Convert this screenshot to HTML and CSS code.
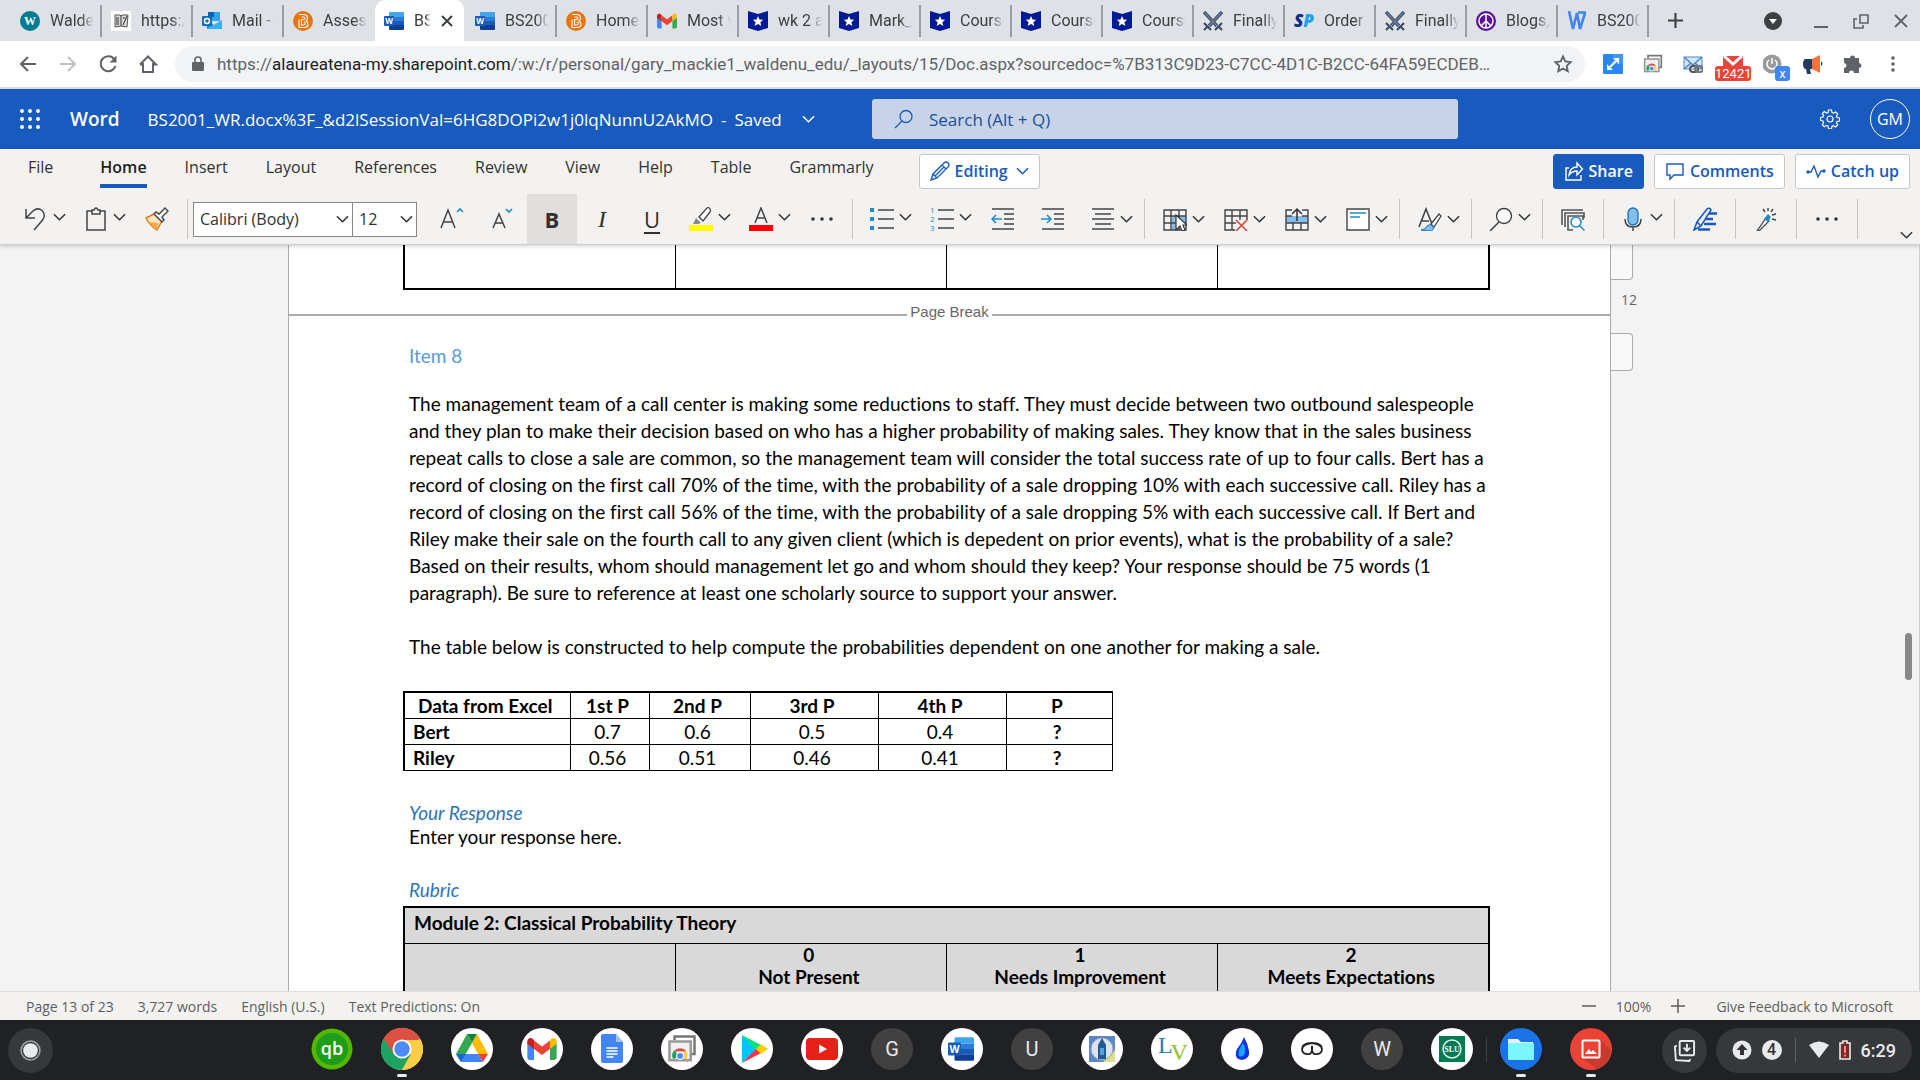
FILE: index.html
```html
<!DOCTYPE html>
<html lang="en">
<head>
    <meta charset="UTF-8">
    <meta name="viewport" content="width=device-width, initial-scale=1.0">
    <title>BS2001_WR.docx - Word</title>
    <link rel="stylesheet" href="styles.css">
</head>
<body>

<!-- shared icons -->
<svg class="sprite" aria-hidden="true">
    <symbol id="chev" viewBox="0 0 14 8"><path d="M1 1l6 6 6-6" fill="none" stroke="currentColor" stroke-width="1.6"/></symbol>
    <symbol id="word" viewBox="0 0 20 20">
        <path d="M6 1h13q1 0 1 1v4H5V2q0-1 1-1z" fill="#41a5ee"/><path d="M5 6h15v4H5z" fill="#2b7cd3"/><path d="M5 10h15v4H5z" fill="#185abd"/><path d="M5 14h15v4q0 1-1 1H6q-1 0-1-1z" fill="#103f91"/>
        <rect y="5" width="10" height="10" rx="1" fill="#185abd"/><text x="5" y="13" font-family="Open Sans, sans-serif" font-size="8" font-weight="700" fill="#fff" text-anchor="middle">W</text>
    </symbol>
    <symbol id="brightspace" viewBox="0 0 20 20">
        <circle cx="10" cy="10" r="10" fill="#e87511"/><path d="M6 3.500h4.500q4 0 4 3.500 0 2-1.500 3 2 1 2 3.200 0 3.300-4 3.300H6V8.500M8.500 6h2q1.500 0 1.500 1.200t-1.500 1.300h-2v5.500h2.200q1.600 0 1.600-1.500T10.700 11" fill="none" stroke="#fff" stroke-width="1.100"/>
    </symbol>
    <symbol id="star-shield" viewBox="0 0 20 20">
        <path d="M0 0l10 3 10-3v17l-10 3-10-3z" fill="#001a96"/><path d="M10 5l1.500 3.500 3.700.3-2.800 2.500.9 3.700-3.300-2-3.300 2 .9-3.700-2.800-2.500 3.700-.3z" fill="#fff"/>
    </symbol>
    <symbol id="swords" viewBox="0 0 20 20">
        <path d="M1 1l13 14M19 1L6 15" stroke="#44546f" stroke-width="3.500"/><path d="M2 2l12 13M18 2L6 15" stroke="#8797b0" stroke-width="1"/><path d="M1 12l7 7M19 12l-7 7M5 15l-4 4M15 15l4 4" stroke="#3a4863" stroke-width="2"/>
    </symbol>
    <symbol id="gmail" viewBox="0 0 24 18">
        <path d="M0 3v13q0 2 2 2h3.500V7z" fill="#4285f4"/><path d="M24 3v13q0 2-2 2h-3.500V7z" fill="#34a853"/><path d="M5.500 2L12 7l6.500-5v7L12 14 5.500 9z" fill="#ea4335"/><path d="M0 3q0-3 3-3 1 0 2.500 2v7L0 5z" fill="#c5221f"/><path d="M24 3q0-3-3-3-1 0-2.500 2v7L24 5z" fill="#fbbc04"/>
    </symbol>
    <symbol id="webstore" viewBox="0 0 24 24">
        <path d="M6 5V2h16v14h-3" fill="#fff" stroke="#777" stroke-width="2"/><rect x="2" y="6" width="17" height="15" fill="#f1f1f1" stroke="#999" stroke-width="2"/>
        <path d="M5 20a5.500 5.500 0 0 1 1-7l4 5z" fill="#1da462"/><path d="M5.500 14a6 6 0 0 1 10 0z" fill="#dd5144"/><path d="M15.500 14q2 3 0 6h-5l3-6z" fill="#ffcd46"/><circle cx="10.500" cy="17.500" r="2.800" fill="#4c8bf5" stroke="#fff"/>
    </symbol>
</svg>

<nav class="tab-strip">
    <div class="tabs">
        <a class="tab" href="#"><svg viewBox="0 0 20 20"><circle cx="10" cy="10" r="10" fill="#007c92"/><text x="10" y="14" font-family="Liberation Serif, serif" font-size="12" font-weight="700" fill="#fff" text-anchor="middle">W</text></svg><span>Walden</span></a>
        <a class="tab" href="#"><svg viewBox="0 0 20 20"><path d="M0 0h20v20H0z" fill="#fff"/><path d="M4 4h5l1 1 1-1h6l-1 12-6-1-6 1z" fill="#d8d8d8" stroke="#555"/><path d="M10 5v10M5 7h3M5 9h3M5 11h3M5 13h3M12 14l4-9M12 7h2" stroke="#333"/></svg><span>https://</span></a>
        <a class="tab" href="#"><svg viewBox="0 0 20 20"><path d="M6 1h12v9H6z" fill="#28a8ea"/><path d="M6 1h6v5H6z" fill="#0364b8"/><path d="M4 9l8 5 8-5v9H5z" fill="#1490df"/><path d="M4 18l16-9v8q0 1-1 1z" fill="#50d9ff" opacity=".5"/><rect y="5" width="10" height="10" rx="1" fill="#0f6cbd"/><circle cx="5" cy="10" r="2.500" fill="none" stroke="#fff" stroke-width="1.500"/></svg><span>Mail - G</span></a>
        <a class="tab last" href="#"><svg><use href="#brightspace"/></svg><span>Assess</span></a>
        <a class="tab active" href="#"><svg><use href="#word"/></svg><span>BS20</span><svg class="close" viewBox="0 0 12 12"><path d="M1 1l10 10M11 1L1 11" stroke="#3c4043" stroke-width="2"/></svg></a>
        <a class="tab" href="#"><svg><use href="#word"/></svg><span>BS2001</span></a>
        <a class="tab" href="#"><svg><use href="#brightspace"/></svg><span>Homep</span></a>
        <a class="tab" href="#"><svg><use href="#gmail"/></svg><span>Most v</span></a>
        <a class="tab" href="#"><svg><use href="#star-shield"/></svg><span>wk 2 as</span></a>
        <a class="tab" href="#"><svg><use href="#star-shield"/></svg><span>Mark_G</span></a>
        <a class="tab" href="#"><svg><use href="#star-shield"/></svg><span>Course</span></a>
        <a class="tab" href="#"><svg><use href="#star-shield"/></svg><span>Course</span></a>
        <a class="tab" href="#"><svg><use href="#star-shield"/></svg><span>Course</span></a>
        <a class="tab" href="#"><svg><use href="#swords"/></svg><span>Finally</span></a>
        <a class="tab" href="#"><svg viewBox="0 0 20 20"><text x="0" y="16" font-family="Open Sans, sans-serif" font-size="17" font-weight="800" font-style="italic" fill="#0b2f87">S<tspan fill="#1aa3e8">P</tspan></text></svg><span>Order</span></a>
        <a class="tab" href="#"><svg><use href="#swords"/></svg><span>Finally</span></a>
        <a class="tab" href="#"><svg viewBox="0 0 20 20"><circle cx="10" cy="10" r="10" fill="#5b0f9b"/><circle cx="10" cy="10" r="7" fill="none" stroke="#fff" stroke-width="1.500"/><path d="M10 3v14M10 10l-5 5M10 10l5 5" stroke="#fff" stroke-width="1.500"/></svg><span>Blogs,</span></a>
        <a class="tab" href="#"><svg viewBox="0 0 20 20"><path d="M2 0l4 18 4-16 3 16 5-16M11 1.500h8" fill="none" stroke="#4285f4" stroke-width="2.600"/></svg><span>BS2001</span></a>
    </div>
    <button class="new-tab" aria-label="New tab"><svg viewBox="0 0 14 14"><path d="M7 0v14M0 7h14" stroke="#3c4043" stroke-width="2"/></svg></button>
    <div class="window-controls">
        <button class="tab-search" aria-label="Search tabs"><svg viewBox="0 0 20 20"><circle cx="10" cy="10" r="9" fill="#3c4043"/><path d="M6 8h8l-4 5z" fill="#fff"/></svg></button>
        <button aria-label="Minimize"><svg viewBox="0 0 20 20"><path d="M3 16h14" stroke="#5f6368" stroke-width="2"/></svg></button>
        <button aria-label="Restore"><svg viewBox="0 0 20 20"><path d="M9 4h8v8H9zM6 8H3v9h9v-3" fill="none" stroke="#5f6368" stroke-width="1.600"/></svg></button>
        <button aria-label="Close"><svg viewBox="0 0 20 20"><path d="M4 4l12 12M16 4L4 16" stroke="#5f6368" stroke-width="1.800"/></svg></button>
    </div>
</nav>

<div class="browser-bar">
    <div class="nav-buttons">
        <button aria-label="Back"><svg viewBox="0 0 20 20"><path d="M18 10H3M10 3l-7 7 7 7" fill="none" stroke="#5f6368" stroke-width="2"/></svg></button>
        <button aria-label="Forward"><svg viewBox="0 0 20 20"><path d="M2 10h15M10 3l7 7-7 7" fill="none" stroke="#bdc1c6" stroke-width="2"/></svg></button>
        <button aria-label="Reload"><svg viewBox="0 0 20 20"><path d="M16.500 5.500A7.500 7.500 0 1 0 17.400 12" fill="none" stroke="#5f6368" stroke-width="2"/><path d="M18.500 1.500v7h-7z" fill="#5f6368"/></svg></button>
        <button aria-label="Home"><svg viewBox="0 0 20 20"><path d="M5 9v9h10V9M2 10.500L10 2.500l8 8h-3.500M2 10.500h3" fill="none" stroke="#5f6368" stroke-width="2"/></svg></button>
    </div>
    <div class="omnibox">
        <svg class="lock" viewBox="0 0 12 16"><rect y="6" width="12" height="9" rx="1" fill="#5f6368"/><path d="M3 7V4a3 3 0 0 1 6 0v3" fill="none" stroke="#5f6368" stroke-width="1.600"/></svg>
        <div class="url" role="textbox" aria-label="Address" contenteditable="true" spellcheck="false">https://<b>alaureatena-my.sharepoint.com</b>/:w:/r/personal/gary_mackie1_waldenu_edu/_layouts/15/Doc.aspx?sourcedoc=%7B313C9D23-C7CC-4D1C-B2CC-64FA59ECDEB…</div>
        <button class="star" aria-label="Bookmark"><svg viewBox="0 0 20 20"><path d="M10 2.500l2.300 5 5.400.6-4 3.700 1.100 5.400L10 14.500l-4.800 2.700 1.100-5.400-4-3.700 5.400-.6z" fill="none" stroke="#5f6368" stroke-width="1.800"/></svg></button>
    </div>
    <div class="extensions">
        <button aria-label="Screen capture"><svg viewBox="0 0 20 20"><rect width="20" height="20" rx="1" fill="#2a85f5"/><path d="M10 0h9q1 0 1 1v9H10z" fill="#55a3ff" opacity=".6"/><path d="M7 13l6-6" stroke="#fff" stroke-width="2"/><path d="M10 4h6v6zM4 10v6h6z" fill="#fff"/></svg></button>
        <button aria-label="Web store"><svg><use href="#webstore"/></svg></button>
        <button aria-label="Mail link"><svg viewBox="0 0 20 20"><path d="M1 3h18v12H1z" fill="#d5e6fb" stroke="#4d83c9"/><path d="M1 3l9 8 9-8M1 15l7-6M19 15l-7-6" fill="none" stroke="#4d83c9" stroke-width="1.500"/><rect x="7" y="12" width="8" height="6" rx="3" fill="none" stroke="#555" stroke-width="2"/><rect x="12" y="12" width="8" height="6" rx="3" fill="none" stroke="#777" stroke-width="2"/></svg></button>
        <button class="badged" aria-label="Mail checker"><svg viewBox="0 0 20 20"><path d="M0 2h20v16H0z" fill="#e8453c"/><path d="M1 2l9 8 9-8" fill="none" stroke="#fff" stroke-width="3"/></svg><span class="badge red">12421</span></button>
        <button class="badged" aria-label="Power"><svg viewBox="0 0 20 20"><circle cx="9" cy="10" r="9.500" fill="#9a9a9a"/><path d="M6 6a5 5 0 1 0 6 0M9 4v6" fill="none" stroke="#fff" stroke-width="1.500"/></svg><span class="badge blue">x</span></button>
        <button aria-label="Announcements"><svg viewBox="0 0 20 20"><path d="M9 5v10H7l1 5H4l-1-5Q0 15 0 10t3-5z" fill="#253b5b"/><path d="M9 5l8-4v18l-8-4z" fill="#ff6f3c"/><path d="M18 7q3 3 0 5z" fill="#253b5b"/></svg></button>
        <button aria-label="Extensions"><svg viewBox="0 0 20 20"><path d="M7 4a2.500 2.500 0 0 1 5 0h4v5a2.500 2.500 0 0 1 0 5v5h-5a2.500 2.500 0 0 0-5 0H1v-5a2.500 2.500 0 0 0 0-5V4z" fill="#5f6368"/></svg></button>
        <button aria-label="Menu"><svg viewBox="0 0 20 20"><circle cx="10" cy="4" r="1.800" fill="#5f6368"/><circle cx="10" cy="10" r="1.800" fill="#5f6368"/><circle cx="10" cy="16" r="1.800" fill="#5f6368"/></svg></button>
    </div>
</div>

<header class="app-header">
    <button class="waffle" aria-label="App launcher"><svg viewBox="0 0 20 20" fill="#fff"><circle cx="2" cy="2" r="2"/><circle cx="10" cy="2" r="2"/><circle cx="18" cy="2" r="2"/><circle cx="2" cy="10" r="2"/><circle cx="10" cy="10" r="2"/><circle cx="18" cy="10" r="2"/><circle cx="2" cy="18" r="2"/><circle cx="10" cy="18" r="2"/><circle cx="18" cy="18" r="2"/></svg></button>
    <div class="title-area">
        <a class="brand" href="#">Word</a>
        <button class="doc-title"><span>BS2001_WR.docx%3F_&amp;d2lSessionVal=6HG8DOPi2w1j0lqNunnU2AkMO</span><span>-</span><span>Saved</span><svg class="chev"><use href="#chev"/></svg></button>
    </div>
    <label class="search">
        <svg viewBox="0 0 20 20"><circle cx="12" cy="7.500" r="6" fill="none" stroke="#185abd" stroke-width="1.300"/><path d="M8 12l-7 7" stroke="#185abd" stroke-width="1.300"/></svg>
        <input type="text" placeholder="Search (Alt + Q)" aria-label="Search">
    </label>
    <div class="account">
        <button aria-label="Settings"><svg viewBox="0 0 20 20" fill="none" stroke="#fff" stroke-width="1.200"><circle cx="10" cy="10" r="3"/><path d="M8.500 1h3l.5 2.500 1.500.7L15.700 3l2 2-1.300 2.200.6 1.300 2.500.5v3l-2.500.5-.6 1.300 1.300 2.200-2 2-2.200-1.300-1.500.6-.5 2.500h-3L8 17l-1.500-.6L4.300 17.700l-2-2 1.300-2.200L3 12 .5 11.500v-3L3 8l.6-1.300L2.300 4.500l2-2L6.500 4 8 3.500z"/></svg></button>
        <button class="avatar">GM</button>
    </div>
</header>

<div class="ribbon">
    <div class="ribbon-tabs">
        <button class="rtab file">File</button>
        <button class="rtab selected">Home</button>
        <button class="rtab">Insert</button>
        <button class="rtab">Layout</button>
        <button class="rtab">References</button>
        <button class="rtab">Review</button>
        <button class="rtab">View</button>
        <button class="rtab">Help</button>
        <button class="rtab">Table</button>
        <button class="rtab">Grammarly</button>
        <button class="pill editing"><svg viewBox="0 0 20 20" fill="none" stroke="currentColor" stroke-width="1.400"><path d="M1 19l2-6L14 2q2-2 4 0t0 4L7 17zM3 13l4 4M12 4l4 4M5 15l9-9"/></svg>Editing<svg class="chev"><use href="#chev"/></svg></button>
        <div class="ribbon-actions">
            <button class="pill share"><svg viewBox="0 0 18 20" fill="none" stroke="currentColor" stroke-width="1.400"><path d="M4 7H1v12h15v-5"/><path d="M4 14q1-8 8-8V2l5.500 6-5.500 6v-4q-5 0-8 4z"/></svg>Share</button>
            <button class="pill"><svg viewBox="0 0 18 20" fill="none" stroke="currentColor" stroke-width="1.400"><path d="M1 3h16v11H8l-4 4v-4H1z"/></svg>Comments</button>
            <button class="pill"><svg viewBox="0 0 20 20" fill="none" stroke="currentColor" stroke-width="1.400"><path d="M2 11h3l3-6 4 11 3-6h3"/><circle cx="2" cy="11" r="1" fill="currentColor"/><circle cx="18" cy="10" r="1" fill="currentColor"/></svg>Catch up</button>
        </div>
    </div>

    <div class="tools">
        <button class="tool split" aria-label="Undo"><svg viewBox="0 0 24 24"><path d="M2 2v9h9M2 11L9 4q5-4 9-.5t1 9L10 23" fill="none" stroke="#444" stroke-width="1.500"/></svg><svg class="chev"><use href="#chev"/></svg></button>
        <button class="tool split" aria-label="Paste"><svg viewBox="0 0 24 24" fill="none" stroke="#444" stroke-width="1.500"><path d="M8 4H3v19h18V4h-5"/><path d="M8 3h2q2-4 4 0h2v4H8z"/></svg><svg class="chev"><use href="#chev"/></svg></button>
        <button class="tool" aria-label="Format painter"><svg viewBox="0 0 24 24"><path d="M1 11l8-4 8 7-5 9q-7-4-11-12z" fill="#fce5c0" stroke="#e07b0c" stroke-width="1.400"/><path d="M4 15l9 1-1 6q-5-2-8-7z" fill="#f7a944"/><path d="M9 7l2-2 3 2 6-6 3 3-6 6 2 3-2 2z" fill="#f3f2f1" stroke="#444" stroke-width="1.400"/></svg></button>
        <i class="sep"></i>
        <div class="font-box">
            <span class="drop family"><select aria-label="Font"><option>Calibri (Body)</option></select><svg class="chev"><use href="#chev"/></svg></span>
            <span class="drop size"><select aria-label="Font size"><option>12</option></select><svg class="chev"><use href="#chev"/></svg></span>
        </div>
        <button class="tool" aria-label="Grow font"><svg viewBox="0 0 24 24"><path d="M1 21L8 3l7 18M3.500 15h9" fill="none" stroke="#444" stroke-width="1.500"/><path d="M17 5l3-3 3 3" fill="none" stroke="#1e8bcd" stroke-width="1.600"/></svg></button>
        <button class="tool" aria-label="Shrink font"><svg viewBox="0 0 24 24"><path d="M3 21L9 7l6 14M5 16h8" fill="none" stroke="#444" stroke-width="1.500"/><path d="M16 2l3 3 3-3" fill="none" stroke="#1e8bcd" stroke-width="1.600"/></svg></button>
        <button class="tool letter bold on">B</button>
        <button class="tool letter italic">I</button>
        <button class="tool letter under">U</button>
        <button class="tool split" aria-label="Highlight"><svg viewBox="0 0 24 24"><path d="M0 18h24v6H0z" fill="#ff0"/><path d="M10 10l8-9q2-1 3 1t0 3l-7 9z" fill="#fff" stroke="#444" stroke-width="1.300"/><path d="M4 17l3-6 5 5-3 1z" fill="#888"/></svg><svg class="chev"><use href="#chev"/></svg></button>
        <button class="tool split" aria-label="Font color"><svg viewBox="0 0 24 24"><path d="M0 18h24v6H0z" fill="red"/><path d="M6 16l6-15 6 15M8 11h8" fill="none" stroke="#444" stroke-width="1.500"/></svg><svg class="chev"><use href="#chev"/></svg></button>
        <button class="tool" aria-label="More font options"><svg viewBox="0 0 24 24" fill="#333"><circle cx="3" cy="12" r="1.800"/><circle cx="12" cy="12" r="1.800"/><circle cx="21" cy="12" r="1.800"/></svg></button>
        <i class="sep"></i>
        <button class="tool split" aria-label="Bullets"><svg viewBox="0 0 24 24"><path d="M0 1h4v4H0zM0 10h4v4H0zM0 19h4v4H0z" fill="#1e8bcd"/><path d="M8 3h16M8 12h16M8 21h16" stroke="#444" stroke-width="1.500"/></svg><svg class="chev"><use href="#chev"/></svg></button>
        <button class="tool split" aria-label="Numbering"><svg viewBox="0 0 24 24"><g font-family="Open Sans, sans-serif" font-size="8" fill="#1e8bcd"><text y="6">1</text><text y="15">2</text><text y="24">3</text></g><path d="M8 3h16M8 12h16M8 21h16" stroke="#444" stroke-width="1.500"/></svg><svg class="chev"><use href="#chev"/></svg></button>
        <button class="tool" aria-label="Decrease indent"><svg viewBox="0 0 24 24"><path d="M1 2h22M13 7h10M13 12h10M13 17h10M1 22h22" stroke="#444" stroke-width="1.500"/><path d="M11 12H1M5 8l-4 4 4 4" fill="none" stroke="#1e8bcd" stroke-width="1.500"/></svg></button>
        <button class="tool" aria-label="Increase indent"><svg viewBox="0 0 24 24"><path d="M1 2h22M13 7h10M13 12h10M13 17h10M1 22h22" stroke="#444" stroke-width="1.500"/><path d="M0 12h10M6 8l4 4-4 4" fill="none" stroke="#1e8bcd" stroke-width="1.500"/></svg></button>
        <button class="tool split low" aria-label="Align"><svg viewBox="0 0 24 24"><path d="M1 2h22M4 7h16M1 12h22M4 17h16M1 22h22" stroke="#444" stroke-width="1.500"/></svg><svg class="chev"><use href="#chev"/></svg></button>
        <i class="sep"></i>
        <button class="tool split low" aria-label="Select table"><svg viewBox="0 0 24 24"><path d="M9 9h14v6H15v8H9z" fill="#83beec"/><path d="M1 3h22v20H1zM8 3v20M16 3v20M1 9h22M1 16h22" fill="none" stroke="#444" stroke-width="1.400"/><path d="M13 8v15l4-4 2 5 3-1-2-5h4z" fill="#fff" stroke="#333" stroke-width="1.200"/></svg><svg class="chev"><use href="#chev"/></svg></button>
        <button class="tool split low" aria-label="Delete table"><svg viewBox="0 0 24 24"><path d="M11 23H1V3h22v10M8 3v20M16 3v10M1 9h22M1 16h11" fill="none" stroke="#444" stroke-width="1.400"/><path d="M12 13l11 11M23 13L12 24" stroke="#e03c31" stroke-width="1.500"/></svg><svg class="chev"><use href="#chev"/></svg></button>
        <button class="tool split low" aria-label="Insert rows"><svg viewBox="0 0 24 24"><path d="M1 9h22v7H1z" fill="#83beec"/><path d="M7 3H1v20h22V3h-6M1 9h6M17 9h6M1 16h22M8 16v7M16 16v7" fill="none" stroke="#444" stroke-width="1.400"/><path d="M12 14V2M7 7l5-5 5 5" fill="none" stroke="#333" stroke-width="1.500"/></svg><svg class="chev"><use href="#chev"/></svg></button>
        <button class="tool split low" aria-label="Cell alignment"><svg viewBox="0 0 24 24"><path d="M1 2h22v21H1z" fill="#fff" stroke="#444" stroke-width="1.400"/><path d="M4 6h16M4 10h10" stroke="#1e8bcd" stroke-width="1.400"/></svg><svg class="chev"><use href="#chev"/></svg></button>
        <i class="sep"></i>
        <button class="tool split low" aria-label="Styles"><svg viewBox="0 0 24 24"><path d="M1 20L8 2l6 15M4 14h7" fill="none" stroke="#444" stroke-width="1.600"/><path d="M13 17l8-10 2 2-7 11z" fill="#fff" stroke="#444" stroke-width="1.300"/><path d="M3 23q4 0 6-4 3-3 6 0 2 5-4 5z" fill="#83beec" stroke="#1e6fb8"/></svg><svg class="chev"><use href="#chev"/></svg></button>
        <i class="sep"></i>
        <button class="tool split" aria-label="Find"><svg viewBox="0 0 24 24"><circle cx="15" cy="9" r="7.500" fill="#fafafa" stroke="#444" stroke-width="1.400"/><path d="M10 15l-9 9" stroke="#444" stroke-width="1.600"/></svg><svg class="chev"><use href="#chev"/></svg></button>
        <i class="sep"></i>
        <button class="tool" aria-label="Reuse files"><svg viewBox="0 0 24 24"><path d="M1 18V3h21M4 20V6h19v5M12 23H7V9h15v4" fill="none" stroke="#555" stroke-width="1.600"/><circle cx="15" cy="15" r="5" fill="#fff" stroke="#1e8bcd" stroke-width="1.500"/><path d="M18.500 18.500l5 5" stroke="#1e8bcd" stroke-width="1.500"/></svg></button>
        <i class="sep"></i>
        <button class="tool split" aria-label="Dictate"><svg viewBox="0 0 24 24"><rect x="7" y="1" width="10" height="17" rx="5" fill="#83beec" stroke="#1e6fb8" stroke-width="1.300"/><path d="M4 12q0 8 8 8t8-8M12 20v4" fill="none" stroke="#444" stroke-width="1.500"/></svg><svg class="chev"><use href="#chev"/></svg></button>
        <i class="sep"></i>
        <button class="tool" aria-label="Editor"><svg viewBox="0 0 24 24"><path d="M1 23l3-8L14 2q3-2 4 1L8 19zM4 15l4 4" fill="none" stroke="#185abd" stroke-width="1.600"/><path d="M16 6.500h8M12 12h8M11 17h12M5 22.500h12" stroke="#185abd" stroke-width="2.600"/></svg></button>
        <i class="sep"></i>
        <button class="tool" aria-label="Designer"><svg viewBox="0 0 24 24"><path d="M3 24l9-13 3 3L5 24z" fill="#fff" stroke="#444" stroke-width="1.300"/><path d="M10 12l4-5 3 3-3 5z" fill="#1e8bcd"/><path d="M14 1v3M19 2l-2 3M22 7l-4 1M9 2l2 3M22 13l-4-1" stroke="#444" stroke-width="1.400"/></svg></button>
        <i class="sep"></i>
        <button class="tool" aria-label="More options"><svg viewBox="0 0 24 24" fill="#333"><circle cx="3" cy="12" r="1.800"/><circle cx="12" cy="12" r="1.800"/><circle cx="21" cy="12" r="1.800"/></svg></button>
        <i class="sep"></i>
        <button class="collapse" aria-label="Collapse ribbon"><svg class="chev"><use href="#chev"/></svg></button>
    </div>
</div>

<main class="canvas">
    <article class="page">
        <table class="grid top">
            <tr><td></td><td></td><td></td><td></td></tr>
        </table>
        <div class="page-break"><span>Page Break</span></div>
        <div class="body">
            <h2>Item 8</h2>
            <p>The management team of a call center is making some reductions to staff. They must decide between two outbound salespeople<br>
            and they plan to make their decision based on who has a higher probability of making sales. They know that in the sales business<br>
            repeat calls to close a sale are common, so the management team will consider the total success rate of up to four calls. Bert has a<br>
            record of closing on the first call 70% of the time, with the probability of a sale dropping 10% with each successive call. Riley has a<br>
            record of closing on the first call 56% of the time, with the probability of a sale dropping 5% with each successive call. If Bert and<br>
            Riley make their sale on the fourth call to any given client (which is depedent on prior events), what is the probability of a sale?<br>
            Based on their results, whom should management let go and whom should they keep? Your response should be 75 words (1<br>
            paragraph). Be sure to reference at least one scholarly source to support your answer.</p>
            <p>The table below is constructed to help compute the probabilities dependent on one another for making a sale.</p>
            <table class="data">
                <colgroup><col class="c1"><col class="c2"><col class="c3"><col class="c4"><col class="c4"><col class="c5"></colgroup>
                <tr><th>Data from Excel</th><th>1st P</th><th>2nd P</th><th>3rd P</th><th>4th P</th><th>P</th></tr>
                <tr><th class="name">Bert</th><td>0.7</td><td>0.6</td><td>0.5</td><td>0.4</td><th>?</th></tr>
                <tr><th class="name">Riley</th><td>0.56</td><td>0.51</td><td>0.46</td><td>0.41</td><th>?</th></tr>
            </table>
            <h3>Your Response</h3>
            <p class="tight">Enter your response here.</p>
            <h3>Rubric</h3>
        </div>
        <table class="grid rubric">
            <tr><th class="module" colspan="4">Module 2: Classical Probability Theory</th></tr>
            <tr><th></th><th>0<br>Not Present</th><th>1<br>Needs Improvement</th><th>2<br>Meets Expectations</th></tr>
        </table>
    </article>
    <aside class="page-marks">
        <div class="mark first"></div>
        <span>12</span>
        <div class="mark"></div>
    </aside>
    <div class="scroll-thumb"></div>
</main>

<footer class="status-bar">
    <button>Page 13 of 23</button>
    <button>3,727 words</button>
    <button>English (U.S.)</button>
    <button>Text Predictions: On</button>
    <div class="zoom">
        <button aria-label="Zoom out"><svg viewBox="0 0 14 14"><path d="M0 7h14" stroke="#605e5c" stroke-width="1.500"/></svg></button>
        <button>100%</button>
        <button aria-label="Zoom in"><svg viewBox="0 0 14 14"><path d="M0 7h14M7 0v14" stroke="#605e5c" stroke-width="1.500"/></svg></button>
    </div>
    <a href="#">Give Feedback to Microsoft</a>
</footer>

<div class="shelf">
    <button class="launcher" aria-label="Launcher"><svg viewBox="0 0 22 22"><circle cx="11" cy="11" r="9" fill="none" stroke="#9aa0a6" stroke-width="1.500"/><circle cx="11" cy="11" r="7" fill="#e8eaed"/></svg></button>
    <div class="apps">
        <button class="app" aria-label="QuickBooks"><svg viewBox="0 0 42 42"><circle cx="21" cy="21" r="20.500" fill="#53b700"/><circle cx="21" cy="21" r="16" fill="#1d9d1b"/><text x="21" y="27" font-family="Open Sans, sans-serif" font-size="18" font-weight="600" fill="#fff" text-anchor="middle">qb</text></svg></button>
        <button class="app running" aria-label="Chrome"><svg viewBox="0 0 42 42"><circle cx="21" cy="21" r="21" fill="#ffcd46"/><path d="M21 21L2.800 10.500A21 21 0 0 0 21 42l9-16z" fill="#1da462"/><path d="M21 21l-9 4L2.800 10.500a21 21 0 0 1 36.400 0z" fill="#dd5144"/><path d="M21 12h18.900A21 21 0 0 1 21 42l9-16z" fill="#ffcd46"/><circle cx="21" cy="21" r="9.500" fill="#fff"/><circle cx="21" cy="21" r="7.700" fill="#4c8bf5"/></svg></button>
        <button class="app" aria-label="Drive"><svg viewBox="0 0 42 42"><circle cx="21" cy="21" r="21" fill="#fff"/><path d="M16 6h10l-5 9z" fill="#188038"/><path d="M16 6L5 26l5 8 11-19z" fill="#34a853"/><path d="M26 6l11 20H27l-6-11z" fill="#fbbc04"/><path d="M15 26h12l5 8H10z" fill="#4285f4"/><path d="M5 26h10l-5 8z" fill="#1967d2"/><path d="M27 26h10l-5 8z" fill="#ea4335"/></svg></button>
        <button class="app" aria-label="Gmail"><svg viewBox="0 0 42 42"><circle cx="21" cy="21" r="21" fill="#fff"/><use href="#gmail" x="6" y="10" width="30" height="22"/></svg></button>
        <button class="app" aria-label="Docs"><svg viewBox="0 0 42 42"><circle cx="21" cy="21" r="21" fill="#fff"/><path d="M10 8q0-2 2-2h13l7 8v19q0 2-2 2H12q-2 0-2-2z" fill="#4285f4"/><path d="M25 6l7 8h-7z" fill="#a1c2fa"/><path d="M15.500 20h11M15.500 23h11M15.500 26h11M15.500 29h7" stroke="#fff" stroke-width="1.300"/></svg></button>
        <button class="app" aria-label="Web Store"><svg viewBox="0 0 42 42"><circle cx="21" cy="21" r="21" fill="#fff"/><use href="#webstore" x="6" y="6" width="30" height="30"/></svg></button>
        <button class="app" aria-label="Play Store"><svg viewBox="0 0 42 42"><circle cx="21" cy="21" r="21" fill="#fff"/><path d="M11 7v28l15-14z" fill="#00c3ff"/><path d="M11 7l19 10-5 5z" fill="#00e676"/><path d="M11 35l19-10-5-4z" fill="#f5344b"/><path d="M30 16l7 5-7 5-5-5z" fill="#ffce00"/></svg></button>
        <button class="app" aria-label="YouTube"><svg viewBox="0 0 42 42"><circle cx="21" cy="21" r="21" fill="#fff"/><rect x="5" y="10" width="32" height="22" rx="4" fill="#e62117"/><path d="M18 16.500v9l8-4.500z" fill="#fff"/></svg></button>
        <button class="app gray">G</button>
        <button class="app" aria-label="Word"><svg viewBox="0 0 42 42"><circle cx="21" cy="21" r="21" fill="#fff"/><use href="#word" x="7" y="8" width="26" height="26"/></svg></button>
        <button class="app gray">U</button>
        <button class="app" aria-label="Parish site"><svg viewBox="0 0 42 42"><circle cx="21" cy="21" r="21" fill="#fff"/><path d="M8 8h26v26H8z" fill="#5b84c9"/><path d="M22 34h12V22z" fill="#dfe08e"/><circle cx="21" cy="21" r="11" fill="#dde3ea" stroke="#90a0b8"/><path d="M17 31V17l4-7 4 7v14z" fill="#1f5b94"/><path d="M19 20h4v7h-4z" fill="#5aa0d8"/></svg></button>
        <button class="app" aria-label="LV"><svg viewBox="0 0 42 42"><circle cx="21" cy="21" r="21" fill="#fff"/><text x="7" y="25" font-family="Liberation Serif, serif" font-size="24" fill="#2f7fb8">L<tspan dy="7" fill="#95c11f">V</tspan></text></svg></button>
        <button class="app" aria-label="Drop"><svg viewBox="0 0 42 42"><circle cx="21" cy="21" r="21" fill="#fff"/><path d="M23 9q-2 6-7 12-4 10 5 11 8-1 7-9-1-7-5-14z" fill="#1230e8"/><path d="M22 15q-6 8-4 13 4 2 6-3 1-5-2-10z" fill="#18a4ff"/></svg></button>
        <button class="app" aria-label="Infiniti"><svg viewBox="0 0 42 42"><circle cx="21" cy="21" r="21" fill="#fff"/><path d="M19 26q-8 1-8-5 1-5 10-6 9 1 10 6 0 6-8 5M11 19q3-4 10-4 7 0 10 4M19 26q3-3 2-8-1 5 2 8" fill="none" stroke="#222" stroke-width="1.800"/></svg></button>
        <button class="app gray">W</button>
        <button class="app" aria-label="SLU"><svg viewBox="0 0 42 42"><circle cx="21" cy="21" r="21" fill="#fff"/><path d="M8 8h26v26H8z" fill="#007a53"/><circle cx="21" cy="21" r="9" fill="none" stroke="#dff0e8" stroke-width="1.500"/><text x="21" y="24" font-family="Liberation Serif, serif" font-size="8" font-weight="700" fill="#fff" text-anchor="middle">SLU</text></svg></button>
        <i class="shelf-sep"></i>
        <button class="app running" aria-label="Files"><svg viewBox="0 0 42 42"><circle cx="21" cy="21" r="21" fill="#1a73e8"/><path d="M8 11h10l3 3h12v4H8z" fill="#e8f0fe"/><rect x="8" y="15" width="26" height="17" rx="1" fill="#7cf6ff"/></svg></button>
        <button class="app running" aria-label="Gallery"><svg viewBox="0 0 42 42"><circle cx="21" cy="21" r="21" fill="#ea4335"/><path d="M31 12l10 10q-1 14-14 19L12 30z" fill="#c93a2e"/><rect x="12.500" y="12.500" width="17" height="17" rx="1" fill="#ea4335" stroke="#fff" stroke-width="2"/><path d="M15 26l4-5 2 3 2-2 4 4z" fill="#fff"/></svg></button>
    </div>
    <div class="tray">
        <button class="launcher" aria-label="Holding space"><svg viewBox="0 0 24 24" fill="none" stroke="#e8eaed" stroke-width="2"><rect x="7" y="2" width="15" height="15" rx="1"/><path d="M4 7l-2 1 1 14 14 1 1-2M14.500 5v7M11 9l3.500 3.500L18 9"/></svg></button>
        <button class="system">
            <svg viewBox="0 0 20 20"><circle cx="10" cy="10" r="9.500" fill="#e8eaed"/><path d="M10 4l5.500 6H12v5H8v-5H4.500z" fill="#333"/></svg>
            <span class="count">4</span>
            <i></i>
            <svg viewBox="0 0 20 20"><path d="M0 5q10-7 20 0L10 18z" fill="#e8eaed"/></svg>
            <svg class="battery" viewBox="0 0 12 20"><path d="M1 3h3V1h4v2h3v16H1z" fill="#7a2a24" stroke="#e8eaed" stroke-width="1.600"/><path d="M6 6v7M6 14.500v2" stroke="#f28b82" stroke-width="2"/></svg>
            <span>6:29</span>
        </button>
    </div>
</div>

</body>
</html>
```
FILE: styles.css
```css
* {
    margin: 0;
    padding: 0;
    box-sizing: border-box;
}

body {
    display: flex;
    flex-direction: column;
    height: 100vh;
    overflow: hidden;
    font-family: "Open Sans", "Noto Sans", sans-serif;
    font-size: 16px;
    color: #323130;
    background: #f3f3f3;
}

button,
input,
select {
    font: inherit;
    color: inherit;
    background: none;
    border: none;
}

button {
    display: flex;
    align-items: center;
    justify-content: center;
    white-space: nowrap;
    cursor: pointer;
}

a {
    color: inherit;
    text-decoration: none;
}

svg {
    display: block;
    flex: none;
    width: 20px;
    height: 20px;
}

.sprite {
    display: none;
}

.chev {
    width: 13px;
    height: 8px;
}

/* browser tabs */
.tab-strip {
    flex: none;
    display: flex;
    align-items: center;
    height: 41px;
    padding-left: 11px;
    background: #dee1e6;
    font: 16px Roboto, sans-serif;
    color: #3c4043;
}

.tabs {
    display: flex;
    align-self: stretch;
    align-items: center;
}

.tab {
    display: flex;
    align-items: center;
    gap: 10px;
    width: 91px;
    height: 32px;
    padding: 0 6px 0 9px;
    border-right: 2px solid #9a9da1;
}

.tab span {
    flex: 1;
    min-width: 0;
    overflow: hidden;
    white-space: nowrap;
    -webkit-mask-image: linear-gradient(to right, #000 70%, transparent);
    mask-image: linear-gradient(to right, #000 70%, transparent);
}

.tab.last,
.tab.active {
    border-right-color: transparent;
}

.tab.active {
    height: 41px;
    padding-right: 11px;
    background: #fff;
    background-clip: padding-box;
    border-radius: 10px 10px 0 0;
}

.tab .close {
    width: 12px;
    height: 12px;
}

.new-tab {
    width: 52px;
}

.new-tab svg {
    width: 15px;
    height: 15px;
}

.window-controls {
    display: flex;
    gap: 20px;
    margin-left: auto;
    padding-right: 9px;
}

.tab-search {
    margin-right: 8px;
}

/* address bar */
.browser-bar {
    flex: none;
    display: flex;
    align-items: center;
    height: 48px;
    background: #fff;
    border-bottom: 2px solid #dadce0;
}

.nav-buttons {
    display: flex;
    gap: 20px;
    padding: 0 17px 0 18px;
}

.omnibox {
    flex: 1;
    min-width: 0;
    display: flex;
    align-items: center;
    height: 36px;
    padding: 0 12px 0 17px;
    background: #f1f3f4;
    border-radius: 18px;
    font: 17px Roboto, sans-serif;
    color: #5f6368;
}

.lock {
    width: 12px;
    height: 16px;
    margin-right: 13px;
}

.url {
    flex: 1;
    overflow: hidden;
    white-space: nowrap;
}

.url b {
    font-weight: 400;
    color: #202124;
}

.extensions {
    display: flex;
    gap: 20px;
    padding: 0 17px 0 18px;
}

.badged {
    position: relative;
}

.badge {
    position: absolute;
    left: -8px;
    top: 12px;
    width: 36px;
    border-radius: 3px;
    font: 13px/15px Roboto, sans-serif;
    color: #fff;
    text-align: center;
}

.red {
    background: #e8453c;
}

.blue {
    left: 12px;
    width: 15px;
    background: #4285f4;
}

/* word header */
.app-header {
    flex: none;
    display: grid;
    grid-template-columns: 20px 832fr 586px 452fr;
    align-items: center;
    height: 60px;
    padding: 0 10px 0 20px;
    background: #185abd;
    font-size: 17px;
    color: #fff;
}

.title-area {
    display: flex;
    align-items: center;
    min-width: 0;
}

.brand {
    margin: 0 28px 0 30px;
    font-size: 19px;
    font-weight: 600;
}

.doc-title {
    gap: 8px;
}

.doc-title .chev {
    margin-left: 12px;
}

.search {
    display: flex;
    align-items: center;
    gap: 15px;
    height: 40px;
    padding: 0 22px;
    background: #c6d3e8;
    border-radius: 3px;
    color: #185abd;
}

.search input {
    flex: 1;
    outline: none;
}

.search input::placeholder {
    color: #1c4f9c;
    opacity: 1;
}

.account {
    display: flex;
    align-items: center;
    justify-content: flex-end;
    gap: 30px;
}

.avatar {
    width: 40px;
    height: 40px;
    border: 1px solid #fff;
    border-radius: 50%;
    font-size: 16px;
}

/* ribbon */
.ribbon {
    flex: none;
    background: #f3f2f1;
    border-bottom: 1px solid #d2d0ce;
    box-shadow: 0 1px 4px rgba(0, 0, 0, 0.2);
    z-index: 1;
}

.ribbon-tabs {
    display: flex;
    gap: 38px;
    height: 45px;
    padding: 0 10px 0 28px;
}

.rtab {
    height: 39px;
    border-bottom: 4px solid transparent;
}

.rtab.file {
    margin-right: 9px;
}

.rtab.selected {
    font-weight: 600;
    color: #201f1e;
    border-color: #185abd;
}

.pill {
    height: 35px;
    margin-top: 5px;
    padding: 0 10px 2px;
    gap: 5px;
    background: #fff;
    border: 1px solid #c8c6c4;
    border-radius: 3px;
    font-weight: 600;
    color: #185abd;
}

.editing {
    margin-left: 7px;
}

.editing .chev {
    margin-left: 3px;
}

.ribbon-actions {
    display: flex;
    gap: 10px;
    margin-left: auto;
}

.share {
    background: #185abd;
    border-color: #185abd;
    color: #fff;
}

.tools {
    display: flex;
    align-items: center;
    height: 50px;
    padding: 0 4px 0 12px;
}

.tool {
    flex: none;
    width: 50px;
    height: 50px;
}

.tool svg {
    width: 24px;
    height: 24px;
}

.split {
    width: 60px;
    gap: 5px;
    padding-left: 6px;
}

.tool .chev {
    width: 13px;
    height: 8px;
    margin-bottom: 4px;
}

.low {
    width: 61px;
}

.low .chev {
    margin-bottom: 0;
}

.letter {
    font-size: 22px;
}

.bold {
    font-weight: 700;
}

.italic {
    font-family: "Liberation Serif", serif;
    font-size: 24px;
    font-style: italic;
}

.under {
    text-decoration: underline;
    text-underline-offset: 4px;
}

.on {
    background: #e1dfdd;
}

.sep {
    flex: none;
    width: 1px;
    height: 40px;
    margin: 0 5px;
    background: #c8c6c4;
}

.font-box {
    flex: none;
    display: flex;
    width: 224px;
    height: 35px;
    margin-right: 10px;
    background: #fff;
    border: 1px solid #8a8886;
}

.drop {
    position: relative;
}

.family {
    flex: 1;
    border-right: 1px solid #8a8886;
}

.size {
    width: 63px;
}

.drop select {
    width: 100%;
    height: 100%;
    padding-left: 6px;
    appearance: none;
}

.drop .chev {
    position: absolute;
    right: 3px;
    top: 12px;
    pointer-events: none;
}

.collapse {
    align-self: flex-end;
    width: 20px;
    height: 18px;
    margin-left: auto;
}

/* document */
.canvas {
    position: relative;
    flex: 1;
    min-height: 0;
    display: flex;
    justify-content: center;
    padding-right: 20px;
    overflow: hidden;
    border-right: 1px solid #d2d0ce;
    font-family: Lato, "Open Sans", sans-serif;
    font-size: 19px;
    font-variant-ligatures: none;
    color: #000;
}

.page {
    flex: none;
    width: 1323px;
    background: #fff;
    border: solid #ababab;
    border-width: 0 1px;
}

.body {
    padding: 0 120px;
}

.grid {
    width: 1087px;
    margin-left: 114px;
    border: 2px solid #000;
    border-collapse: collapse;
    table-layout: fixed;
}

.grid td,
.grid th {
    border: 1px solid #000;
}

.top {
    border-top: none;
}

.top td {
    height: 44px;
    border-top: none;
}

.page-break {
    display: flex;
    align-items: center;
    height: 24px;
    margin-top: 13px;
    font: 15px/18px "Liberation Sans", sans-serif;
    color: #666;
}

.page-break::before,
.page-break::after {
    content: "";
    flex: 1;
    height: 2px;
    background: #ababab;
}

.page-break span {
    padding: 0 3px 6px;
}

h2,
h3 {
    font-size: 19px;
    font-weight: 400;
    line-height: 24px;
}

h2 {
    margin: 17px 0 22px;
    color: #5b9bd5;
}

h3 {
    margin-top: 30px;
    font-style: italic;
    color: #2e74b5;
}

.body p {
    margin-bottom: 27px;
    line-height: 27px;
    white-space: nowrap;
}

.body .tight {
    margin: 0;
    line-height: 23px;
}

.data {
    width: 708px;
    margin: 31px 0 0 -6px;
    border: 2px solid #000;
    border-width: 2px 1px 1px 2px;
    border-collapse: collapse;
    table-layout: fixed;
    line-height: 25px;
    text-align: center;
}

.data td,
.data th {
    padding-right: 4px;
    border: 1px solid #000;
}

.data .name {
    padding-left: 8px;
    text-align: left;
}

.c1 {
    width: 166px;
}

.c2 {
    width: 79px;
}

.c3 {
    width: 101px;
}

.c4 {
    width: 128px;
}

.c5 {
    width: 106px;
}

.rubric {
    margin-top: 4px;
    background: #d9d9d9;
    line-height: 22px;
}

.rubric th {
    height: 90px;
    padding-right: 4px;
    vertical-align: top;
}

.rubric .module {
    height: 36px;
    padding: 4px 0 0 9px;
    text-align: left;
}

.page-marks {
    flex: none;
    width: 22px;
    margin-right: -22px;
    font: 14px/20px "Open Sans", sans-serif;
    color: #666;
    text-align: right;
}

.page-marks span {
    display: block;
    margin: 10px -4px 23px 0;
}

.mark {
    height: 38px;
    background: #f8f8f8;
    border: 1px solid #ababab;
    border-left: none;
    border-radius: 0 4px 4px 0;
}

.mark.first {
    height: 35px;
    border-top: none;
    border-top-right-radius: 0;
}

.scroll-thumb {
    position: absolute;
    top: 52%;
    right: 7px;
    width: 7px;
    height: 47px;
    background: #8a8886;
    border-radius: 4px;
}

/* status bar */
.status-bar {
    flex: none;
    display: flex;
    align-items: center;
    gap: 24px;
    height: 29px;
    padding: 0 27px 0 26px;
    background: #f3f2f1;
    border-top: 1px solid #e1dfdd;
    font-size: 14px;
    color: #605e5c;
}

.zoom {
    display: flex;
    gap: 20px;
    margin-left: auto;
    margin-right: 7px;
}

.zoom svg {
    width: 14px;
    height: 14px;
}

/* shelf */
.shelf {
    flex: none;
    display: grid;
    grid-template-columns: 1fr auto 1fr;
    align-items: center;
    height: 60px;
    padding: 0 8px;
    background: #202124;
    font-family: Roboto, sans-serif;
    color: #e8eaed;
}

.launcher {
    width: 45px;
    height: 45px;
    background: #37383b;
    border-radius: 50%;
}

.launcher svg {
    width: 23px;
    height: 23px;
}

.apps {
    display: flex;
    align-items: center;
    gap: 28px;
    padding: 0 0 2px 3px;
}

.app {
    position: relative;
    width: 42px;
    height: 42px;
    border-radius: 50%;
}

.app svg {
    width: 42px;
    height: 42px;
}

.gray {
    background: #414141;
    font-size: 20px;
}

.running::after {
    content: "";
    position: absolute;
    bottom: -7px;
    width: 10px;
    height: 3px;
    background: #e8eaed;
    border-radius: 2px;
}

.shelf-sep {
    width: 1px;
    height: 25px;
    margin: 0 -15px;
    background: #3c4043;
}

.tray {
    display: flex;
    justify-content: flex-end;
    gap: 9px;
}

.system {
    gap: 10px;
    height: 45px;
    padding: 0 16px;
    background: #37383b;
    border-radius: 23px;
    font-size: 18px;
    font-weight: 500;
}

.system i {
    width: 1px;
    height: 24px;
    margin: 0 3px;
    background: #5f6368;
}

.count {
    width: 20px;
    height: 20px;
    background: #e8eaed;
    border-radius: 50%;
    font-size: 16px;
    line-height: 20px;
    color: #333;
}

.battery {
    width: 12px;
}
```
